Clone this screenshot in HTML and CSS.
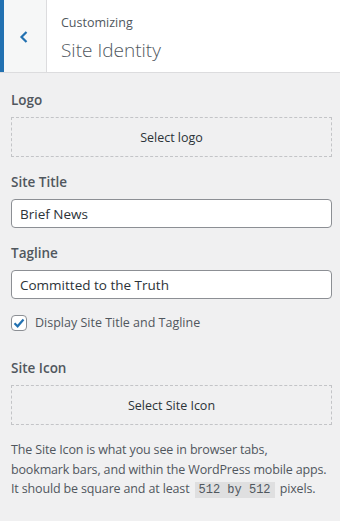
FILE: index.html
```html
<!DOCTYPE html>
<html>
<head>
<meta charset="utf-8">
<link rel="stylesheet" href="styles.css">
</head>
<body>
<div class="panel">
  <header class="head">
    <button class="back" aria-label="Back">
      <svg width="12" height="14" viewBox="0 0 12 14"><path d="M8.5 2 L3.5 7 L8.5 12" fill="none" stroke="currentColor" stroke-width="2.2"/></svg>
    </button>
    <div class="titles">
      <div class="sub">Customizing</div>
      <div class="title">Site Identity</div>
    </div>
  </header>
  <main class="body">
    <section class="ctl">
      <div class="label">Logo</div>
      <div class="drop">Select logo</div>
    </section>
    <section class="ctl">
      <div class="label">Site Title</div>
      <input class="input" type="text" value="Brief News">
    </section>
    <section class="ctl">
      <div class="label">Tagline</div>
      <input class="input" type="text" value="Committed to the Truth">
    </section>
    <label class="check">
      <span class="box"><svg width="14" height="14" viewBox="0 0 14 14"><path d="M2.5 7.3 L5.6 10.3 L11.5 3.6" fill="none" stroke="#2271b1" stroke-width="2.2"/></svg></span>
      <span>Display Site Title and Tagline</span>
    </label>
    <section class="ctl">
      <div class="label">Site Icon</div>
      <div class="drop">Select Site Icon</div>
    </section>
    <p class="desc">The Site Icon is what you see in browser tabs,<br>bookmark bars, and within the WordPress mobile apps.<br>It should be square and at least <code>512 by 512</code> pixels.</p>
  </main>
</div>
</body>
</html>
```
FILE: styles.css
```css
* { box-sizing: border-box; }
html, body { margin: 0; padding: 0; }
body {
  background: #f0f0f1;
  font-family: "Open Sans", "Noto Sans", sans-serif;
  color: #50575e;
  width: 340px;
  height: 521px;
  overflow: hidden;
}
.head {
  display: flex;
  height: 73px;
  background: #fff;
  border-bottom: 1px solid #dcdcde;
}
.back {
  width: 47px;
  height: 72px;
  border: 0;
  border-left: 4px solid #2271b1;
  border-right: 1px solid #dcdcde;
  background: #f6f7f7;
  color: #2271b1;
  padding: 0;
  display: flex;
  align-items: center;
  justify-content: center;
}
.back svg { margin-left: -3px; margin-top: 1px; }
.titles { padding: 14px 0 0 14px; }
.sub { font-size: 12.5px; line-height: 18px; color: #50575e; }
.title { font-size: 19px; line-height: 28px; color: #50575e; margin-top: 4px; font-weight: 300; }
.body { padding: 17px 8px 0 11px; }
.ctl { margin-bottom: 15px; }
.label {
  font-size: 13.5px;
  font-weight: 600;
  color: #50575e;
  line-height: 20px;
  margin-bottom: 7px;
}
.drop {
  height: 40px;
  border: 1px dashed #c3c4c7;
  display: flex;
  align-items: center;
  justify-content: center;
  font-size: 12.5px;
  color: #2c3338;
}
.input {
  display: block;
  width: 321px;
  height: 29px;
  border: 1px solid #8c8f94;
  border-radius: 4px;
  background: #fff;
  padding: 0 8px;
  font-family: inherit;
  font-size: 13.5px;
  color: #2c3338;
}
.check {
  display: flex;
  align-items: center;
  gap: 8px;
  font-size: 12.5px;
  color: #50575e;
  margin: 6px 0 27px;
}
.box {
  width: 16px;
  height: 16px;
  border: 1px solid #8c8f94;
  border-radius: 4px;
  background: #fff;
  display: flex;
  align-items: center;
  justify-content: center;
}
.desc {
  margin: 9px -8px 0 0;
  font-size: 12.5px;
  line-height: 19.5px;
  letter-spacing: -0.15px;
  white-space: nowrap;
  color: #50575e;
}
code {
  font-family: "Liberation Mono", "DejaVu Sans Mono", monospace;
  font-size: 12px;
  letter-spacing: 0;
  background: rgba(0,0,0,0.07);
  padding: 1px 4px;
  margin: 0 2px;
}
```
